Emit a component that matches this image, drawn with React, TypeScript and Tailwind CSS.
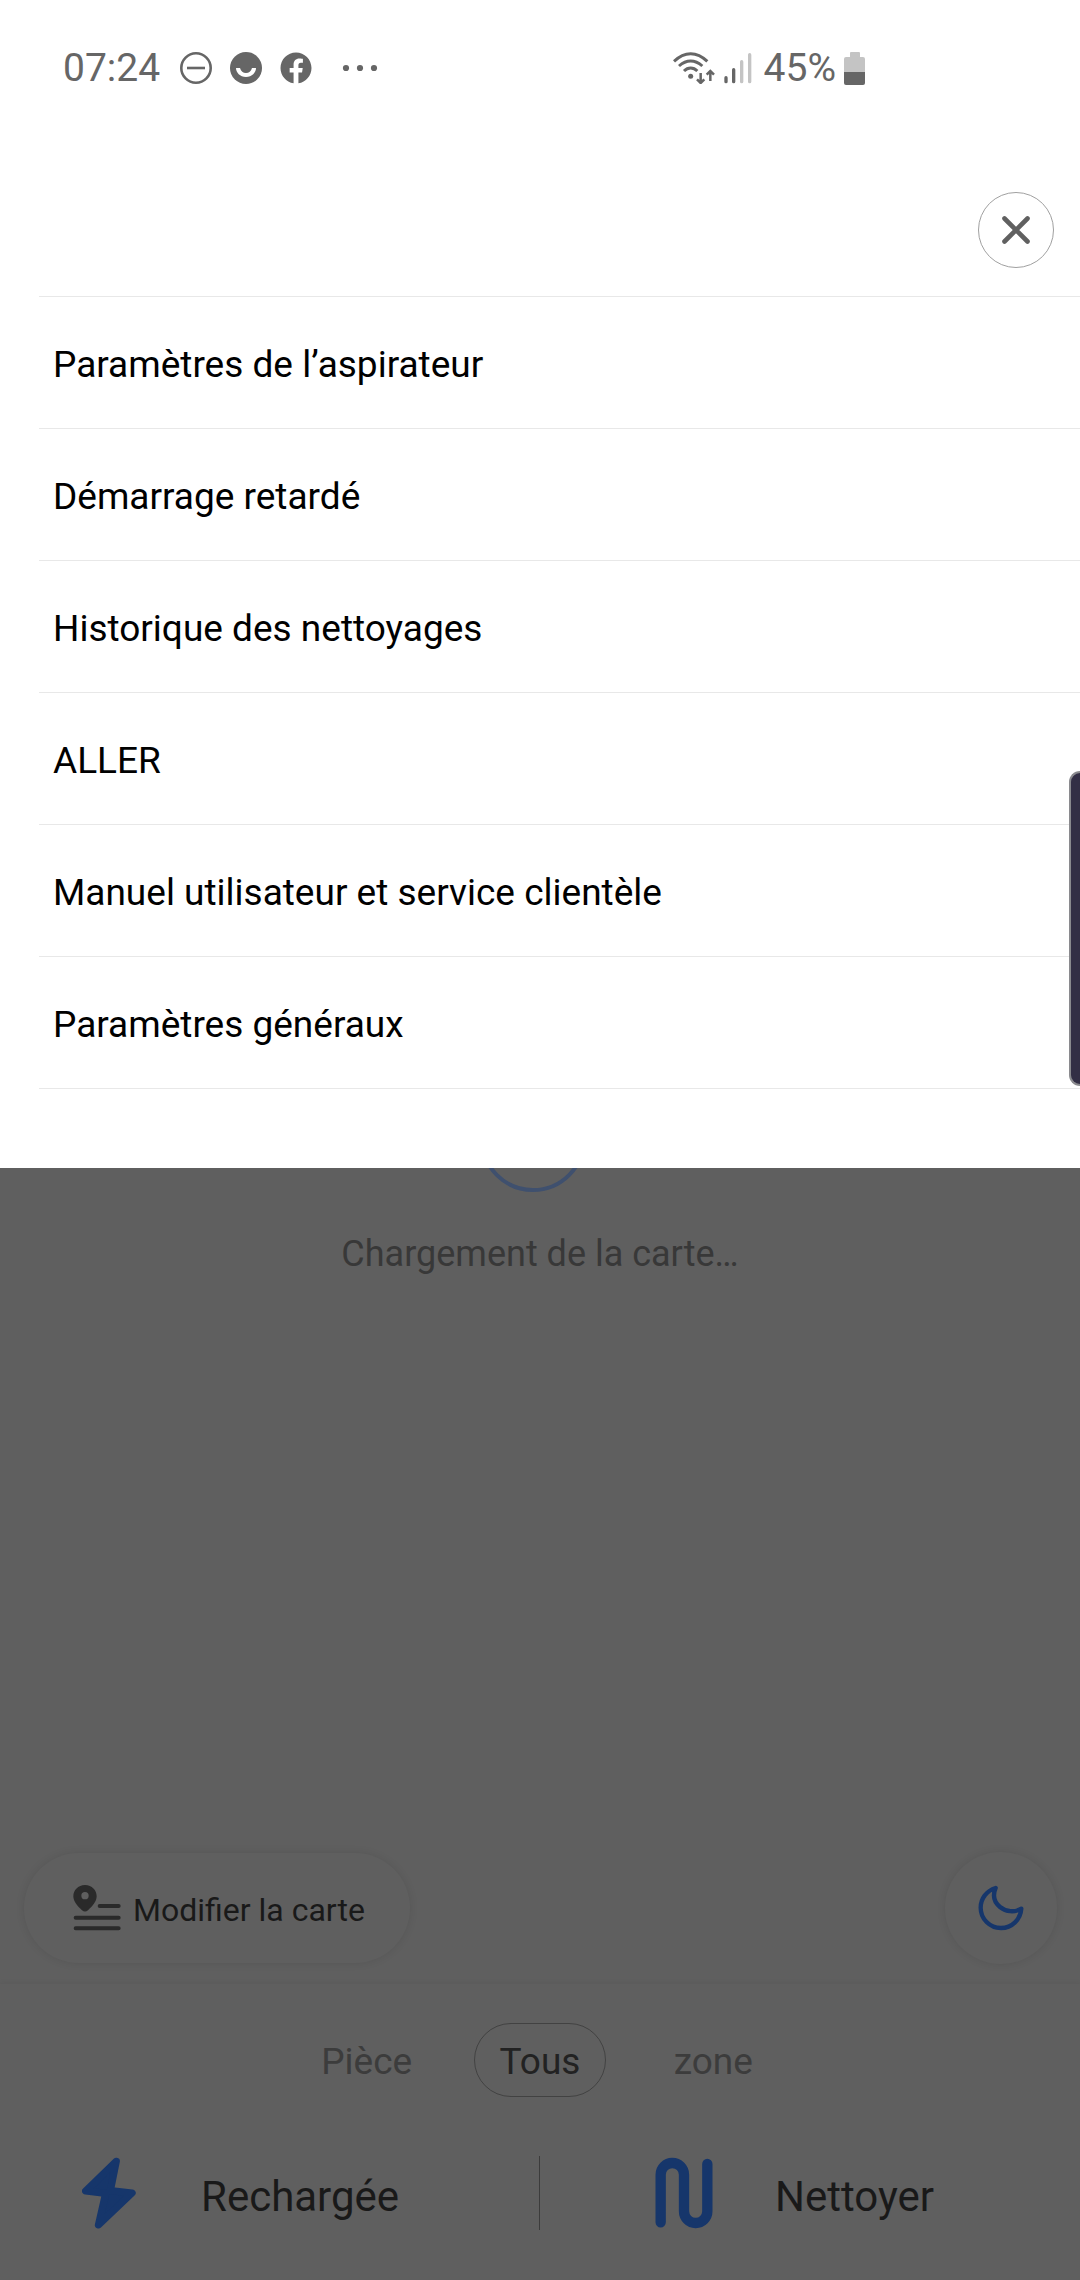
import React, { useState } from 'react';
import { FaFacebook } from 'react-icons/fa';

type Mode = 'room' | 'all' | 'zone';

const menuItems = [
  'Paramètres de l’aspirateur',
  'Démarrage retardé',
  'Historique des nettoyages',
  'ALLER',
  'Manuel utilisateur et service clientèle',
  'Paramètres généraux',
];

const modes: { id: Mode; label: string }[] = [
  { id: 'room', label: 'Pièce' },
  { id: 'all', label: 'Tous' },
  { id: 'zone', label: 'zone' },
];

const StatusBar: React.FC = () => (
  <div className="flex h-[136px] items-center justify-between pl-[63px] pr-[215px] text-[39px] leading-[44px] text-[#666666]">
    <div className="flex items-center">
      <span>07:24</span>
      <div className="ml-5 flex items-center gap-[18px]">
        <svg className="size-8" viewBox="0 0 32 32" fill="none" stroke="currentColor" strokeWidth="2.6">
          <circle cx="16" cy="16" r="14.7" />
          <path d="M7 16h18" />
        </svg>
        <svg className="size-8" viewBox="0 0 32 32">
          <circle cx="16" cy="16" r="16" fill="currentColor" />
          <path d="M6 16h4c1 3.500 3 5 6 5s5-1.500 6-5h4c0 4.500-4 9-10 9S6 20.500 6 16z" fill="#fff" />
        </svg>
        <FaFacebook className="size-8" />
        <svg className="ml-3 h-2 w-9" viewBox="0 0 36 8" fill="currentColor">
          <circle cx="4" cy="4" r="3.100" />
          <circle cx="18" cy="4" r="3.100" />
          <circle cx="32" cy="4" r="3.100" />
        </svg>
      </div>
    </div>

    <div className="flex items-center">
      {/* wifi with up/down traffic */}
      <svg className="h-8 w-[42px]" viewBox="65 63 126 96" fill="none" stroke="currentColor">
        <path d="M68 91Q92 68 118 68T168 91" strokeWidth="9" />
        <path d="M83 105Q100 90 118 90T153 105" strokeWidth="9" />
        <path d="M98 120Q107 111 118 111T138 120" strokeWidth="9" />
        <circle cx="118" cy="136" r="7.500" fill="currentColor" stroke="none" />
        <path d="M148 126v29M137 145l11 11 11-11M177 150v-29M166 131l11-11 11 11" strokeWidth="7.500" />
      </svg>
      <svg className="ml-[9px] h-8 w-7" viewBox="215 66 84 96" strokeWidth="10" strokeLinecap="round" stroke="currentColor">
        <path d="M221 143v12M244 119v36" />
        <path d="M268 95v60M292 74v81" stroke="#c4c4c4" />
      </svg>
      <span className="ml-3">45%</span>
      <svg className="ml-2 h-[33px] w-[21px]" viewBox="0 0 21 33">
        <path d="M6 1a1 1 0 0 1 1-1h8a1 1 0 0 1 1 1v4h3a2 2 0 0 1 2 2v13H0V7a2 2 0 0 1 2-2h4z" fill="#c4c4c4" />
        <path d="M0 20h21v11a2 2 0 0 1-2 2H2a2 2 0 0 1-2-2z" fill="currentColor" />
      </svg>
    </div>
  </div>
);

const App: React.FC = () => {
  const [mode, setMode] = useState<Mode>('all');

  return (
    <div className="flex min-h-screen flex-col bg-[#5f5f5f] font-[Roboto,sans-serif]">
      {/* Menu sheet */}
      <div className="relative z-10 bg-white pb-[79px]">
        <StatusBar />
        <div className="flex justify-end pb-7 pr-[26px] pt-14">
          <button
            aria-label="Fermer"
            className="flex size-[76px] items-center justify-center rounded-full border border-[#a0a0a0]"
          >
            <svg className="size-7" viewBox="0 0 28 28" stroke="#606060" strokeWidth="4.600" strokeLinecap="round">
              <path d="M2.500 2.500l23 23M25.500 2.500l-23 23" />
            </svg>
          </button>
        </div>
        <nav className="ml-[39px] border-t border-[#e8e8e8]">
          {menuItems.map((item) => (
            <button
              key={item}
              className="block w-full border-b border-[#e8e8e8] pb-10 pl-3.5 pt-11 text-left text-[37px] leading-[47px] text-black"
            >
              {item}
            </button>
          ))}
        </nav>
        {/* Edge panel handle */}
        <div className="absolute bottom-[82px] right-0 h-[315px] w-[11px] rounded-l-[14px] border-2 border-r-0 border-[#8a8a8e] bg-[#332f45]" />
      </div>

      {/* Dimmed map page */}
      <main className="flex flex-1 flex-col">
        <div className="flex flex-col items-center overflow-hidden">
          <div className="-mt-[82px] mr-3.5 size-[106px] rounded-full border-4 border-[#3f506e]" />
          <p className="mt-[38px] text-[36px] leading-[48px] text-[#383838]">Chargement de la carte…</p>
        </div>

        <div className="mt-auto flex items-center justify-between pb-5 pl-6 pr-[23px]">
          <button className="flex h-[110px] items-center rounded-full pl-[49px] pr-[45px] text-[32px] leading-10 text-[#191919] shadow-[0_0_8px_rgba(0,0,0,0.1)]">
            <svg className="mr-3 h-[46px] w-12" viewBox="0 0 144 138" fill="#2a2a2a">
              <path
                fillRule="evenodd"
                d="M36 0C15 0 1 16 1 34c0 15 12 29 26 42 6 5 12 5 18 0 14-13 26-27 26-42C71 16 57 0 36 0zm0 21a11 11 0 1 1 0 22 11 11 0 0 1 0-22z"
              />
              <path d="M80 63h57M8 98h129M8 130h129" stroke="#2a2a2a" strokeWidth="12" strokeLinecap="round" />
            </svg>
            <span className="pt-1">Modifier la carte</span>
          </button>
          <button
            aria-label="Mode nuit"
            className="flex size-28 items-center justify-center rounded-full shadow-[0_0_8px_rgba(0,0,0,0.1)]"
          >
            <svg className="size-[46px]" viewBox="0 0 138 138" fill="none" stroke="#16366b" strokeWidth="13" strokeLinejoin="round">
              <path d="M53 9C26 17 8 40 8 68c0 33 27 61 61 61 33 0 59-26 61-58C110 83 84 81 66 66 48 51 44 30 53 9z" />
            </svg>
          </button>
        </div>

        <div className="pt-[39px] shadow-[0_0_6px_rgba(0,0,0,0.08)]">
          <div className="mx-auto grid w-[520px] grid-cols-3">
            {modes.map(({ id, label }) => (
              <button
                key={id}
                onClick={() => setMode(id)}
                className={`mx-auto h-[74px] rounded-full border px-[25px] pt-1 text-[37px] leading-[68px] ${
                  mode === id ? 'border-[#424242] text-[#222222]' : 'border-transparent text-[#3c3c3c]'
                }`}
              >
                {label}
              </button>
            ))}
          </div>

          <div className="mt-[59px] flex pb-[50px] text-[42px] leading-[66px] text-[#191919]">
            <button className="flex w-1/2 items-center gap-[65px] border-r border-[#3c3c3c] pl-[82px]">
              <svg className="h-[74px] w-[54px]" viewBox="126 80 164 220" fill="#16366b" stroke="#16366b" strokeWidth="22" strokeLinejoin="round">
                <path d="M230 94L137 184 198 191 176 287 278 190 212 183z" />
              </svg>
              <span className="pt-2">Rechargée</span>
            </button>
            <button className="flex w-1/2 items-center gap-[62px] pl-[115px]">
              <svg className="h-[72px] w-[58px]" viewBox="0 0 174 216" fill="none" stroke="#16366b" strokeWidth="31" strokeLinecap="round">
                <path d="M17 196V53a35 35 0 0 1 70 0v110a35 35 0 0 0 70 0V21" />
              </svg>
              <span className="pt-2">Nettoyer</span>
            </button>
          </div>
        </div>
      </main>
    </div>
  );
};

export default App;
